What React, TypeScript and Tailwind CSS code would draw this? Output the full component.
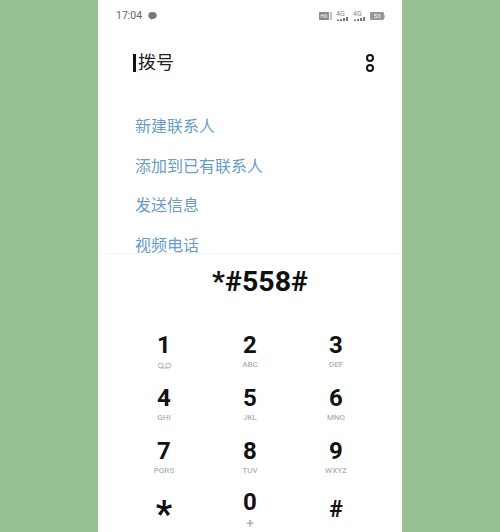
const fontStack = { fontFamily: '"Roboto", "Noto Sans CJK SC", sans-serif' };

const keys: [string, string][] = [
  ['1', ''],
  ['2', 'ABC'],
  ['3', 'DEF'],
  ['4', 'GHI'],
  ['5', 'JKL'],
  ['6', 'MNO'],
  ['7', 'PQRS'],
  ['8', 'TUV'],
  ['9', 'WXYZ'],
];

const actions = ['新建联系人', '添加到已有联系人', '发送信息', '视频电话'];

function Voicemail() {
  return (
    <svg width="15" height="7" viewBox="0 0 16 7" fill="none" stroke="#a5aeaa" strokeWidth="1">
      <circle cx="4" cy="3.5" r="2.6" />
      <circle cx="12" cy="3.5" r="2.6" />
      <path d="M4 6.1h8" />
    </svg>
  );
}

function Signal() {
  return (
    <div className="flex flex-col items-start w-[13px]">
      <span className="text-[7px] leading-[6px] text-[#888]">4G</span>
      <svg width="13" height="4" viewBox="0 0 13 4" fill="#777">
        <rect x="1" y="2.5" width="2" height="1.5" />
        <rect x="4" y="2" width="2" height="2" />
        <rect x="7" y="1" width="2" height="3" />
        <rect x="10" y="0" width="2" height="4" />
      </svg>
    </div>
  );
}

function StatusIcons() {
  return (
    <div className="flex items-center gap-[4px]">
      <div className="flex items-center gap-px">
        <div className="w-[10px] h-[8px] rounded-[1px] bg-[#8a8a8a] flex items-center justify-center">
          <span className="text-[5px] leading-none text-white">HD</span>
        </div>
        <div className="w-[2px] h-[8px] bg-[#bbb]" />
      </div>
      <Signal />
      <Signal />
      <div className="flex items-center">
        <div className="w-[14px] h-[8px] rounded-[1px] bg-[#999] flex items-center justify-center">
          <span className="text-[6px] leading-none text-white">53</span>
        </div>
        <div className="w-px h-[3px] bg-[#bbb]" />
      </div>
    </div>
  );
}

function Key({ digit, sub }: { digit: string; sub: string }) {
  return (
    <div className="h-[53px] flex flex-col items-center">
      <span className="text-[24px] leading-[28px] font-bold text-[#111]">{digit}</span>
      <div className="h-[12px] flex items-center justify-center">
        {sub ? (
          <span className="text-[8px] leading-none font-medium text-[#a8b9ad]">{sub}</span>
        ) : (
          <Voicemail />
        )}
      </div>
    </div>
  );
}

export default function App() {
  return (
    <div className="w-[500px] h-[532px] bg-[#98c095] flex justify-center overflow-hidden" style={fontStack}>
      <div className="w-[304px] h-[532px] bg-white flex flex-col">
        {/* status bar */}
        <div className="h-[32px] shrink-0 pl-[18px] pr-[17px] flex items-center justify-between">
          <div className="flex items-center gap-[6px]">
            <span className="text-[10.5px] leading-none text-[#666]">17:04</span>
            <svg width="9" height="8" viewBox="0 0 9 8" fill="#777">
              <ellipse cx="4.5" cy="3.5" rx="4.2" ry="3.4" />
              <path d="M3 6 L3 8 L5.5 6.5 Z" />
            </svg>
          </div>
          <StatusIcons />
        </div>

        {/* title */}
        <div className="h-[62px] shrink-0 pl-[35px] pr-[28px] flex items-center justify-between">
          <div className="flex items-center gap-[2px]">
            <div className="w-[3px] h-[18px] bg-[#111]" />
            <span className="text-[18px] leading-none text-[#222]">拨号</span>
          </div>
          <div className="flex flex-col gap-[2px]">
            <div className="w-[8px] h-[8px] rounded-full border-2 border-[#111]" />
            <div className="w-[8px] h-[8px] rounded-full border-2 border-[#111]" />
          </div>
        </div>

        {/* actions */}
        <div className="h-[160px] shrink-0 pl-[37px] pt-[22px] flex flex-col gap-[18.5px] border-b border-[#f6f6f6] overflow-hidden">
          {actions.map((a) => (
            <div key={a} className="text-[16px] leading-[21px] text-[#6a9cc6]">
              {a}
            </div>
          ))}
        </div>

        {/* number */}
        <div className="h-[56px] shrink-0 pl-[20px] flex items-center justify-center">
          <span className="text-[28.5px] leading-none font-bold text-[#111]">*#558#</span>
        </div>

        {/* keypad */}
        <div className="grid grid-cols-3 px-[23px] pt-[21px]">
          {keys.map(([d, s]) => (
            <Key key={d} digit={d} sub={s} />
          ))}
          <div className="h-[42px] flex justify-center pt-[6px]">
            <span className="text-[36px] leading-[36px] font-bold text-[#111]">*</span>
          </div>
          <div className="h-[42px] flex flex-col items-center -mt-[2px]">
            <span className="text-[24px] leading-[28px] font-bold text-[#111]">0</span>
            <span className="text-[13px] leading-[15px] font-bold text-[#a8b9ad]">+</span>
          </div>
          <div className="h-[42px] flex justify-center pt-[6px]">
            <span className="text-[23px] leading-[28px] font-bold text-[#111]">#</span>
          </div>
        </div>
      </div>
    </div>
  );
}
